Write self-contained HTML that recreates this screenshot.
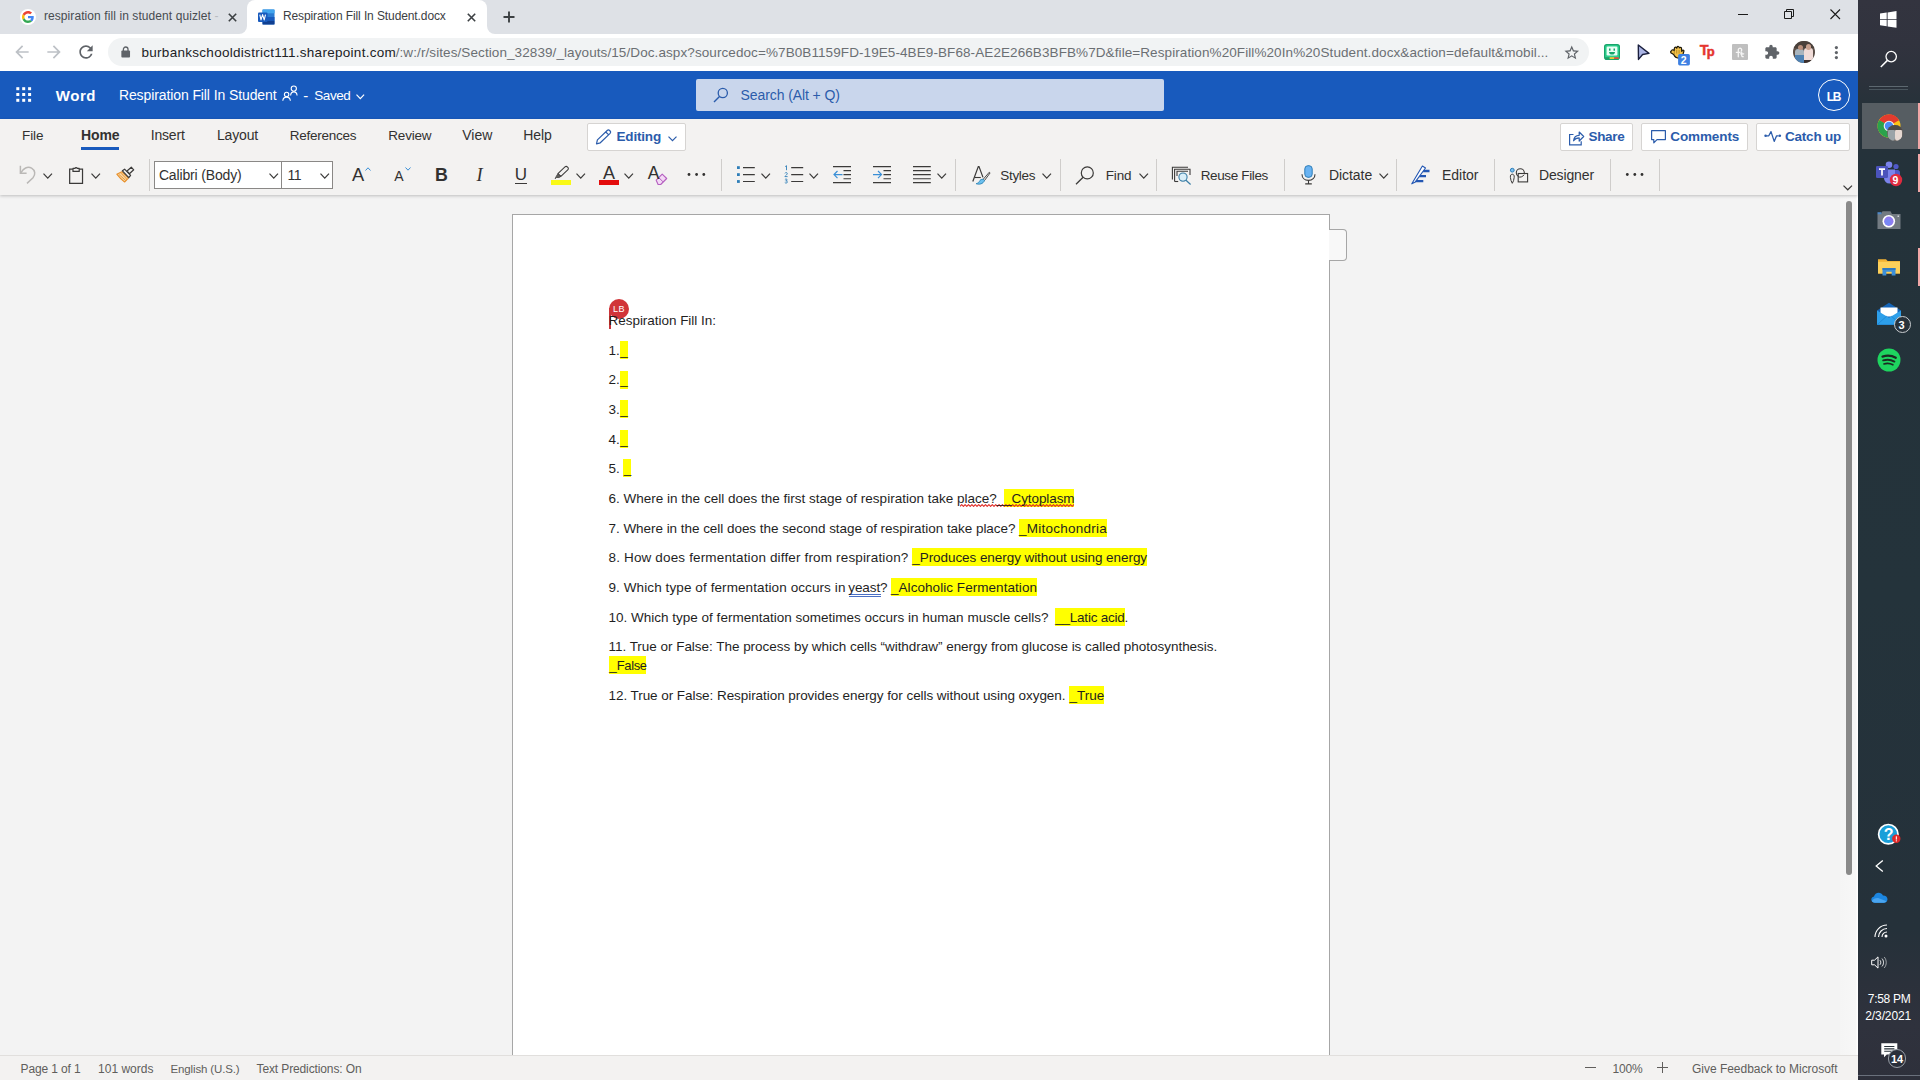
<!DOCTYPE html>
<html><head><meta charset="utf-8"><title>Respiration Fill In Student.docx</title>
<style>

*{box-sizing:border-box;margin:0;padding:0}
html,body{width:1920px;height:1080px;overflow:hidden;background:#f3f3f3;font-family:"Liberation Sans",sans-serif}
.a{position:absolute}
svg{position:absolute;overflow:visible}
.t{position:absolute;white-space:nowrap;line-height:20px;color:#323130;font-family:"Liberation Sans",sans-serif}
#tabstrip{left:0;top:0;width:1858px;height:34px;background:#dee1e6}
#acttab{left:247px;top:0;width:240px;height:34px;background:#fff;border-radius:8px 8px 0 0}
.foot{width:8px;height:8px;top:26px;background:#fff}
.foot i{position:absolute;display:block;width:16px;height:16px;border-radius:8px;background:#dee1e6;top:-8px}
#toolbar{left:0;top:34px;width:1858px;height:37px;background:#fff}
#omni{left:108px;top:38px;width:1481px;height:28px;border-radius:14px;background:#f1f3f4}
#whead{left:0;top:71px;width:1858px;height:48px;background:#185abd}
#search{left:696px;top:79px;width:468px;height:32px;border-radius:2px;background:#c9d6ec}
#lb{left:1818px;top:79px;width:32px;height:32px;border-radius:16px;border:1px solid #fff}
#ribbon{left:0;top:119px;width:1858px;height:76px;background:#f3f2f1;box-shadow:0 1px 3px rgba(0,0,0,.22)}
.btn{background:#fff;border:1px solid #d6d4d2;border-radius:2px;top:123px;height:28px}
.sep{width:1px;top:159px;height:32px;background:#cfcdcb}
#fontbox{left:154px;top:161px;width:179px;height:28px;background:#fff;border:1px solid #8a8886}
#fontbox i{position:absolute;left:126px;top:0;width:1px;height:26px;background:#8a8886}
#homeul{left:81px;top:147px;width:38px;height:3px;background:#185abd}
#canvas{left:0;top:195px;width:1858px;height:860px;background:#f3f3f3;z-index:-1}
#page{left:512px;top:214px;width:818px;height:845px;background:#fff;border:1px solid #a6a6a6;border-bottom:none}
#ptab{left:1329px;top:229px;width:18px;height:32px;background:#f8f8f8;border:1px solid #a6a6a6;border-left:none;border-radius:0 4px 4px 0}
#status{left:0;top:1055px;width:1858px;height:25px;background:#f3f2f1;border-top:1px solid #e1dfdd}
#sbthumb{left:1846px;top:201px;width:6px;height:674px;border-radius:3px;background:#8a8a8a}
#sbedge{left:1840px;top:195px;width:18px;height:860px;background:linear-gradient(90deg,#f5f5f5 0,#f7f7f7 88%,#fdfdfd 94%,#fff 100%)}
#taskbar{left:1858px;top:0;width:62px;height:1080px;background:linear-gradient(180deg,#33343f 0,#31333e 4%,#2d323c 7%,#27323a 9.5%,#24323a 16%,#24333b 55%,#25313a 86%,#2b313b 91%,#2f323d 95%,#2e303b 100%)}
.hl{background:#ffff00;height:18px}

</style></head>
<body>

<div class="a" id="canvas"></div>
<div class="a" id="sbedge"></div>
<div class="a" id="sbthumb"></div>
<div class="a" id="page"></div>
<div class="a" id="ptab"></div>
<div class="a hl" style="left:620px;top:340.8px;width:7.6px"></div><div class="a hl" style="left:620px;top:370.5px;width:7.6px"></div><div class="a hl" style="left:620px;top:400.1px;width:7.6px"></div><div class="a hl" style="left:620px;top:429.7px;width:7.6px"></div><div class="a hl" style="left:623.3px;top:459.4px;width:7.9px"></div><div class="a hl" style="left:1003.8px;top:489.0px;width:70.4px"></div><div class="a hl" style="left:1018.7px;top:518.6px;width:88.5px"></div><div class="a hl" style="left:912px;top:548.2px;width:235.0px"></div><div class="a hl" style="left:890.8px;top:577.9px;width:146.2px"></div><div class="a hl" style="left:1055px;top:607.5px;width:70.3px"></div><div class="a hl" style="left:609px;top:656.2px;width:37.0px"></div><div class="a hl" style="left:1069.2px;top:685.9px;width:35.0px"></div><svg style="left:959.5px;top:503.98px;overflow:hidden" width="114.5" height="3.500" viewBox="0 0 114.5 3.500"><path d="M0 2.400l1.700-1.800l1.700 1.800l1.700-1.800l1.700 1.800l1.700-1.800l1.700 1.800l1.700-1.800l1.700 1.800l1.700-1.800l1.700 1.800l1.700-1.800l1.700 1.800l1.700-1.800l1.700 1.800l1.700-1.800l1.700 1.800l1.700-1.800l1.700 1.800l1.700-1.800l1.700 1.800l1.700-1.800l1.700 1.800l1.700-1.800l1.700 1.800l1.700-1.800l1.700 1.800l1.700-1.800l1.700 1.800l1.700-1.800l1.700 1.800l1.700-1.800l1.700 1.800l1.700-1.800l1.700 1.800l1.700-1.800l1.700 1.800l1.700-1.800l1.700 1.800l1.700-1.800l1.700 1.800l1.700-1.800l1.700 1.800l1.700-1.800l1.700 1.800l1.700-1.800l1.700 1.800l1.700-1.800l1.700 1.800l1.700-1.800l1.700 1.800l1.700-1.800l1.700 1.800l1.700-1.800l1.700 1.800l1.700-1.800l1.700 1.800l1.700-1.800l1.700 1.800l1.700-1.800l1.700 1.800l1.700-1.800l1.700 1.800l1.700-1.800l1.700 1.800l1.700-1.800l1.700 1.800l1.700-1.800l1.700 1.800" stroke="#e02d27" stroke-width="1.100" fill="none" stroke-linejoin="round"/></svg><div class="a" style="left:849px;top:593.5px;width:32px;height:3px;border-top:1px solid #4a6fc4;border-bottom:1px solid #4a6fc4"></div>
<!-- collaborator flag -->
<div class="a" style="left:609px;top:308px;width:2px;height:21px;background:#c7353b"></div>
<div class="a" style="left:609px;top:299px;width:20px;height:20px;border-radius:10px;background:#d13438"></div>

<div class="a" id="tabstrip"></div>
<div class="a" id="acttab"></div>
<div class="a foot" style="left:239px"><i style="left:-8px"></i></div>
<div class="a foot" style="left:487px"><i style="left:0"></i></div>
<div class="a" id="toolbar"></div>
<div class="a" id="omni"></div>
<!-- google favicon -->
<div class="a" style="left:20px;top:9px;width:16px;height:16px;border-radius:8px;background:#fff"></div>
<svg style="left:22px;top:11px" width="12" height="12" viewBox="0 0 48 48"><path fill="#EA4335" d="M24 9.5c3.54 0 6.71 1.22 9.21 3.6l6.85-6.85C35.9 2.38 30.47 0 24 0 14.62 0 6.51 5.38 2.56 13.22l7.98 6.19C12.43 13.72 17.74 9.5 24 9.5z"/><path fill="#4285F4" d="M46.98 24.55c0-1.57-.15-3.09-.38-4.55H24v9.02h12.94c-.58 2.96-2.26 5.48-4.78 7.18l7.73 6c4.51-4.18 7.09-10.36 7.09-17.65z"/><path fill="#FBBC05" d="M10.53 28.59c-.48-1.45-.76-2.99-.76-4.59s.27-3.14.76-4.59l-7.98-6.19C.92 16.46 0 20.12 0 24c0 3.88.92 7.54 2.56 10.78l7.97-6.19z"/><path fill="#34A853" d="M24 48c6.48 0 11.93-2.13 15.89-5.81l-7.73-6c-2.15 1.45-4.92 2.3-8.16 2.3-6.26 0-11.57-4.22-13.47-9.91l-7.98 6.19C6.51 42.62 14.62 48 24 48z"/></svg>
<!-- tab1 close -->
<svg style="left:228px;top:13px" width="9" height="9" viewBox="0 0 9 9"><path d="M.8.8l7.4 7.4M8.2.8L.8 8.2" stroke="#3c4043" stroke-width="1.6" fill="none"/></svg>
<!-- word favicon -->
<svg style="left:258px;top:9px" width="17" height="16" viewBox="0 0 17 16"><rect x="4.5" y="0.5" width="12" height="15" rx="1" fill="#2b7cd3"/><rect x="4.5" y="0.5" width="12" height="3.8" fill="#41a5ee"/><rect x="4.5" y="8" width="12" height="3.8" fill="#185abd"/><rect x="4.5" y="11.8" width="12" height="3.7" fill="#103f91"/><rect x="0" y="3.5" width="9.5" height="9.5" rx="1" fill="#185abd"/><path d="M1.8 5.6l1.2 5.3 1.6-5.3 1.6 5.3 1.3-5.3" stroke="#fff" stroke-width="1.1" fill="none" stroke-linejoin="round"/></svg>
<!-- tab2 close -->
<svg style="left:466.5px;top:13px" width="9" height="9" viewBox="0 0 9 9"><path d="M.8.8l7.4 7.4M8.2.8L.8 8.2" stroke="#3c4043" stroke-width="1.6" fill="none"/></svg>
<!-- new tab plus -->
<svg style="left:503px;top:11px" width="12" height="12" viewBox="0 0 12 12"><path d="M6 .5v11M.5 6h11" stroke="#3c4043" stroke-width="1.9" fill="none"/></svg>
<!-- window controls -->
<svg style="left:1738px;top:9px" width="104" height="11" viewBox="0 0 104 11"><path d="M0 5.5h10" stroke="#1b1b1b" stroke-width="1"/><path d="M46.5 2.5h7v7h-7zM48.5 2.5v-2h7v7h-2" stroke="#1b1b1b" stroke-width="1" fill="none"/><path d="M92.5.5l9.5 9.5M102 .5l-9.500 9.500" stroke="#1b1b1b" stroke-width="1.1" fill="none"/></svg>
<!-- nav -->
<svg style="left:12px;top:42px" width="20" height="20" viewBox="0 0 24 24"><path fill="#bdc1c6" d="M20 11H7.83l5.590-5.590L12 4l-8 8 8 8 1.410-1.410L7.830 13H20v-2z"/></svg>
<svg style="left:44px;top:42px" width="20" height="20" viewBox="0 0 24 24"><path fill="#bdc1c6" d="M4 11h12.170l-5.590-5.590L12 4l8 8-8 8-1.410-1.410L16.170 13H4v-2z"/></svg>
<svg style="left:76px;top:42px" width="20" height="20" viewBox="0 0 24 24"><path fill="#5f6368" d="M17.650 6.350A7.958 7.958 0 0 0 12 4c-4.420 0-7.990 3.580-7.990 8s3.570 8 7.990 8c3.730 0 6.840-2.550 7.730-6h-2.080A5.990 5.990 0 0 1 12 18c-3.310 0-6-2.690-6-6s2.690-6 6-6c1.660 0 3.140.690 4.220 1.780L13 11h7V4l-2.350 2.350z"/></svg>
<!-- lock -->
<svg style="left:121.400px;top:45.600px" width="9.400" height="12" viewBox="0 0 10 13"><rect x="0.300" y="5" width="9.400" height="7.500" rx="1" fill="#5f6368"/><path d="M2.500 5.500V3.600a2.500 2.500 0 0 1 5 0V5.500" stroke="#5f6368" stroke-width="1.400" fill="none"/></svg>
<!-- star -->
<svg style="left:1563px;top:43.500px" width="17.500" height="17.500" viewBox="0 0 24 24"><path fill="#5f6368" d="M22 9.240l-7.190-.620L12 2 9.190 8.630 2 9.240l5.460 4.730L5.820 21 12 17.270 18.180 21l-1.630-7.030L22 9.240zM12 15.400l-3.760 2.270 1-4.280-3.320-2.880 4.380-.380L12 6.100l1.710 4.040 4.380.380-3.320 2.880 1 4.280L12 15.400z"/></svg>
<!-- ext1 green face -->
<svg style="left:1604px;top:44px" width="16" height="16" viewBox="0 0 16 16"><rect x="0.600" y="0.600" width="14.800" height="14.800" rx="2.200" fill="#2fd08f" stroke="#17a56b" stroke-width="1.200"/><rect x="2.600" y="2.600" width="10.800" height="8.800" rx="1.200" fill="#e9fff5"/><rect x="5" y="4.500" width="1.500" height="2.200" fill="#17a56b"/><rect x="9.500" y="4.500" width="1.500" height="2.200" fill="#17a56b"/><path d="M5 8h6c0 1.600-1.300 2.600-3 2.600S5 9.600 5 8z" fill="#17a56b"/><rect x="1.200" y="13.200" width="4.500" height="1.800" fill="#1f9d68"/><rect x="5.700" y="13.200" width="4.500" height="1.800" fill="#f2c531"/><rect x="10.200" y="13.200" width="4.500" height="1.800" fill="#e2493b"/></svg>
<!-- ext2 cursor -->
<svg style="left:1637px;top:44px" width="14" height="16" viewBox="0 0 14 16"><path d="M1.300 1L12 9.400l-6.400 1.100-4.100 4.900z" fill="#aab4e4" stroke="#1a1f3d" stroke-width="1.400" stroke-linejoin="round"/></svg>
<!-- ext3 hand + badge -->
<svg style="left:1669px;top:45px" width="22" height="21" viewBox="0 0 22 21"><path d="M2.600 5.600c.6-1.300 2-1 2.500 0l.3-2.400c.3-1.500 2.100-1.400 2.300 0l.3-.9c.6-1.400 2.300-.9 2.300.5l.4-.2c1-.7 2 .2 1.800 1.300l.3 2.500c.4-.9 1.200-1.600 2-1 .5.600-.2 1.500-.4 2.400-.5 3-2.200 5.300-5 5.300-2.400 0-3.800-1.400-4.700-3.500L1.800 7.800c-.4-.9 0-1.800.8-2.200z" fill="#f2c14a" stroke="#1c1708" stroke-width="1.200" stroke-linejoin="round"/><path d="M5.300 6v3M7.700 4.800v3.800M10.100 5v3.600" stroke="#a87b12" stroke-width=".7"/><rect x="9.100" y="8.900" width="11.800" height="11.500" rx="1.600" fill="#3e80e2"/></svg>
<!-- ext4 Tp drawn as text later; ext5 gray -->
<div class="a" style="left:1732px;top:44px;width:16px;height:16px;background:#bfbfbf;border-radius:1px"></div>
<svg style="left:1732px;top:44px" width="16" height="16" viewBox="0 0 16 16"><path d="M6.300 12.800V5.800a1.700 1.700 0 1 1 2.900 1.300M4.300 8.300h3.800M9.700 8.300v3.200c0 .9.500 1.300 1.500 1.200M8.500 9.800h3.200" stroke="#f6f6f6" stroke-width="1.300" fill="none" stroke-linecap="round"/></svg>
<!-- puzzle -->
<svg style="left:1763.500px;top:44.200px" width="16" height="16" viewBox="0 0 24 24"><path fill="#5f6368" d="M20.500 11H19V7c0-1.100-.900-2-2-2h-4V3.500C13 2.120 11.880 1 10.500 1S8 2.120 8 3.500V5H4c-1.100 0-1.990.900-1.990 2v3.800H3.500c1.490 0 2.700 1.210 2.700 2.700s-1.210 2.700-2.700 2.700H2V20c0 1.100.900 2 2 2h3.800v-1.500c0-1.490 1.210-2.700 2.700-2.700 1.490 0 2.700 1.210 2.700 2.700V22H17c1.100 0 2-.900 2-2v-4h1.500c1.380 0 2.500-1.120 2.500-2.500S21.880 11 20.500 11z"/></svg>
<!-- avatar -->
<div class="a" style="left:1793px;top:41px;width:22px;height:22px;border-radius:11px;overflow:hidden;background:#5a4e47">
<div class="a" style="left:0;top:0;width:22px;height:7px;background:#4a413b"></div>
<div class="a" style="left:2px;top:8px;width:9px;height:7px;border-radius:3px 3px 0 0;background:#a9b5be"></div>
<div class="a" style="left:2px;top:14px;width:9px;height:9px;background:#4f82b3"></div>
<div class="a" style="left:11px;top:7px;width:9px;height:12px;border-radius:3px 3px 0 0;background:#f0dcd8"></div>
<div class="a" style="left:11px;top:19px;width:10px;height:4px;background:#3a2f2c"></div>
<div class="a" style="left:4.500px;top:3.500px;width:5px;height:5.500px;border-radius:3px;background:#b98f7c"></div>
<div class="a" style="left:12.500px;top:3px;width:5px;height:5.500px;border-radius:3px;background:#c9a18f"></div>
</div>
<!-- menu dots -->
<svg style="left:1834px;top:45px" width="5" height="15" viewBox="0 0 5 15"><circle cx="2.400" cy="2.600" r="1.600" fill="#5f6368"/><circle cx="2.400" cy="7.600" r="1.600" fill="#5f6368"/><circle cx="2.400" cy="12.600" r="1.600" fill="#5f6368"/></svg>

<div class="a" id="whead"></div>
<div class="a" id="search"></div>
<div class="a" id="lb"></div>
<!-- waffle -->
<svg style="left:16px;top:87px" width="16" height="16" viewBox="0 0 16 16"><g fill="#fff"><rect x=".3" y=".2" width="3" height="3"/><rect x="6.200" y=".2" width="3" height="3"/><rect x="12.100" y=".2" width="3" height="3"/><rect x=".3" y="6" width="3" height="3"/><rect x="6.200" y="6" width="3" height="3"/><rect x="12.100" y="6" width="3" height="3"/><rect x=".3" y="11.800" width="3" height="3"/><rect x="6.200" y="11.800" width="3" height="3"/><rect x="12.100" y="11.800" width="3" height="3"/></g></svg>
<!-- people icon -->
<svg style="left:282px;top:85px" width="17" height="17" viewBox="0 0 17 17"><g stroke="#fff" stroke-width="1.100" fill="none"><circle cx="11.800" cy="3.600" r="2.600"/><path d="M8.600 10.500c.2-2.300 1.500-3.600 3.200-3.600s3.100 1.300 3.300 3.600"/><circle cx="4.600" cy="9.400" r="2.200"/><path d="M.8 15.800c.2-2.300 1.700-3.700 3.800-3.700s3.500 1.400 3.800 3.700"/></g></svg>
<!-- search icon -->
<svg style="left:713px;top:87px" width="16" height="16" viewBox="0 0 16 16"><circle cx="9.800" cy="6" r="4.600" stroke="#2b5cab" stroke-width="1.300" fill="none"/><path d="M6.500 9.400L1 15" stroke="#2b5cab" stroke-width="1.400"/></svg>
<div class="a" id="ribbon"></div>
<div class="a" id="homeul"></div>
<div class="a btn" style="left:587px;width:99px"></div>
<div class="a btn" style="left:1560px;width:73px"></div>
<div class="a btn" style="left:1641px;width:107px"></div>
<div class="a btn" style="left:1756px;width:94px"></div>
<!-- pencil -->
<svg style="left:595px;top:129px" width="17" height="16" viewBox="0 0 17 16"><path d="M1.500 14.800l.9-3.900L12.200 1.500a1.700 1.700 0 0 1 2.400 0l.5.500a1.700 1.700 0 0 1 0 2.400L5.300 13.800z M10.800 3l2.900 2.900" stroke="#2b5cab" stroke-width="1.200" fill="none" stroke-linejoin="round"/></svg>
<!-- share icon -->
<svg style="left:1568px;top:129.500px" width="17" height="16" viewBox="0 0 17 16"><path d="M5.500 4.500H1.600v10.300h11.600v-3.600" stroke="#2b5cab" stroke-width="1.200" fill="none"/><path d="M5.600 10.800c.3-3.400 2.400-5.400 5.600-5.500V2l4.500 4.500-4.500 4.500V7.900c-2.600 0-4.300.8-5.600 2.900z" stroke="#2b5cab" stroke-width="1.200" fill="none" stroke-linejoin="round"/></svg>
<!-- comment icon -->
<svg style="left:1650.500px;top:130px" width="15" height="14" viewBox="0 0 15 14"><path d="M.6.600h13.800v9H6l-3.200 3.200V9.600H.6z" stroke="#2b5cab" stroke-width="1.200" fill="none" stroke-linejoin="round"/></svg>
<!-- catch up icon -->
<svg style="left:1764px;top:130px" width="18" height="13" viewBox="0 0 18 13"><path d="M2.200 5.800h2.600L7 1.600l3.200 9.800 2.400-5.600h2" stroke="#2b5cab" stroke-width="1.300" fill="none" stroke-linejoin="round"/><circle cx="1.600" cy="5.800" r="1.300" fill="#2b5cab"/><circle cx="15.800" cy="5.800" r="1.300" fill="#2b5cab"/></svg>
<!-- ribbon row 2 -->
<div class="a sep" style="left:149px"></div>
<div class="a sep" style="left:721px"></div>
<div class="a sep" style="left:955px"></div>
<div class="a sep" style="left:1060px"></div>
<div class="a sep" style="left:1156px"></div>
<div class="a sep" style="left:1284px"></div>
<div class="a sep" style="left:1396px"></div>
<div class="a sep" style="left:1494px"></div>
<div class="a sep" style="left:1610px"></div>
<div class="a sep" style="left:1659px"></div>
<div class="a" id="fontbox"><i></i></div>
<!-- undo (disabled) -->
<svg style="left:19px;top:165px" width="18" height="19" viewBox="0 0 18 19"><path d="M1.400 .8v7.400h6.200" stroke="#bab8b6" stroke-width="1.500" fill="none"/><path d="M1.800 7.800C4.200 3.400 8.600 1 12.600 3.200c3.800 2.200 4 6.600 1.400 9.600L8 18.400" stroke="#bab8b6" stroke-width="1.500" fill="none"/></svg>
<!-- clipboard -->
<svg style="left:69px;top:165.700px" width="14.200" height="18.300" viewBox="0 0 15 19"><path d="M4 3.200H.7v15h13.600v-15H11" stroke="#3b3a39" stroke-width="1.300" fill="none"/><path d="M4.200 5.600V2.400h2a1.400 1.400 0 0 1 2.600 0h2v3.200z" stroke="#3b3a39" stroke-width="1.300" fill="none" stroke-linejoin="round"/></svg>
<!-- format painter -->
<svg style="left:116px;top:166px" width="19" height="17" viewBox="0 0 19 17"><path d="M.8 8.200l5-2.400 6.600 6.200-3.800 4c-2.600-1.800-5.400-4.600-7.800-7.800z" fill="#f8d7a6" stroke="#e8912d" stroke-width="1.100" stroke-linejoin="round"/><path d="M2.800 8.400l6.600 5.800M5 7.200l5.600 5.800" stroke="#e8912d" stroke-width=".9"/><path d="M6.400 4.800l2.200-1.600 6 6.200-1.800 2.300z" fill="#f3f2f1" stroke="#3b3a39" stroke-width="1.200" stroke-linejoin="round"/><path d="M11 5l4.300-3.800 2.400 2.600-4.300 3.900z" fill="#f3f2f1" stroke="#3b3a39" stroke-width="1.200" stroke-linejoin="round"/></svg>
<!-- grow/shrink carets -->
<svg style="left:365px;top:166.500px" width="6" height="4" viewBox="0 0 6 4"><path d="M.5 3.500L3 .8l2.500 2.700" stroke="#3a8fd6" stroke-width="1" fill="none"/></svg>
<svg style="left:405px;top:166.500px" width="6" height="4" viewBox="0 0 6 4"><path d="M.5 .5L3 3.200 5.500 .5" stroke="#3a8fd6" stroke-width="1" fill="none"/></svg>
<!-- underline bar for U -->
<div class="a" style="left:515px;top:183px;width:12px;height:1.200px;background:#3b3a39"></div>
<!-- highlighter -->
<svg style="left:553.500px;top:166px" width="15.800" height="13.900" viewBox="0 0 17 15"><path d="M4.200 8.300L11.800 1c.9-.8 2-.7 2.800.1l.3.300c.8.900.8 2-.1 2.800L7.400 11.300z" stroke="#3b3a39" stroke-width="1.100" fill="none" stroke-linejoin="round"/><path d="M4.200 8.300l3.200 3-2 1.200-2.600-.1-1.600 1.300 1.300-2.700z" fill="#605e5c" stroke="#3b3a39" stroke-width=".8" stroke-linejoin="round"/></svg>
<div class="a" style="left:551px;top:180px;width:20px;height:4.500px;background:#f9f916"></div>
<div class="a" style="left:599px;top:180px;width:20px;height:4.500px;background:#e40c0c"></div>
<!-- eraser -->
<svg style="left:655px;top:173px" width="13" height="12" viewBox="0 0 13 12"><path d="M1.200 7.200L7.200 1.200l4.500 4.300-6 6-2.600-.1z" fill="#f3d9f5" stroke="#b55fc0" stroke-width="1.100" stroke-linejoin="round"/><path d="M3.800 4.600l4.300 4.300" stroke="#b55fc0" stroke-width="1"/></svg>
<!-- dots -->
<svg style="left:686px;top:172px" width="22" height="5" viewBox="0 0 22 5"><g fill="#323130"><circle cx="3" cy="2.500" r="1.400"/><circle cx="10.600" cy="2.500" r="1.400"/><circle cx="17.800" cy="2.500" r="1.400"/></g></svg>
<svg style="left:1624px;top:172px" width="22" height="5" viewBox="0 0 22 5"><g fill="#323130"><circle cx="3.300" cy="2.500" r="1.400"/><circle cx="10.800" cy="2.500" r="1.400"/><circle cx="18" cy="2.500" r="1.400"/></g></svg>
<!-- bullets -->
<svg style="left:736px;top:165px" width="20" height="19" viewBox="0 0 20 19"><g fill="#2e7eb8"><rect x="1" y="1.200" width="2.800" height="2.800"/><rect x="1" y="8.200" width="2.800" height="2.800"/><rect x="1" y="15.100" width="2.800" height="2.800"/></g><path d="M7 2.600h11.800M7 9.600h11.800M7 16.500h11.800" stroke="#3b3a39" stroke-width="1.100"/></svg>
<!-- numbering -->
<svg style="left:784px;top:165px" width="20" height="19" viewBox="0 0 20 19"><path d="M7.200 2.600h12M7.200 9.600h12M7.200 16.500h12" stroke="#3b3a39" stroke-width="1.100"/><g stroke="#2e7eb8" stroke-width=".9" fill="none"><path d="M1.200 1.600l1.300-.9v4.500"/><path d="M.9 8.300c.3-.9 2.400-1 2.400.2 0 1-1.700 1.800-2.400 3.100h2.700"/><path d="M.9 14.600c.5-.8 2.400-.7 2.300.4-.1.700-.8.900-1.500.9.900 0 1.700.3 1.700 1.100 0 1.200-2.100 1.300-2.600.5"/></g></svg>
<!-- outdent -->
<svg style="left:833px;top:165px" width="19" height="19" viewBox="0 0 19 19"><path d="M0 1.600h18M10.500 5.600h7.500M10.500 9.600h7.500M10.500 13.700h7.500M0 17.600h18" stroke="#3b3a39" stroke-width="1.100"/><path d="M9.500 9.600H1M4.500 6L1 9.600l3.500 3.600" stroke="#3a8fd6" stroke-width="1.200" fill="none"/></svg>
<!-- indent -->
<svg style="left:873px;top:165px" width="19" height="19" viewBox="0 0 19 19"><path d="M0 1.600h18M10.500 5.600h7.500M10.500 9.600h7.500M10.500 13.700h7.500M0 17.600h18" stroke="#3b3a39" stroke-width="1.100"/><path d="M0 9.600h8.500M5 6l3.500 3.600L5 13.200" stroke="#3a8fd6" stroke-width="1.200" fill="none"/></svg>
<!-- align -->
<svg style="left:913px;top:165px" width="19" height="19" viewBox="0 0 19 19"><path d="M0 1.600h17.800M0 5.600h17.800M0 9.600h17.800M0 13.700h17.800M0 17.600h17.800" stroke="#3b3a39" stroke-width="1.100"/></svg>
<!-- styles icon -->
<svg style="left:972px;top:166px" width="19" height="19" viewBox="0 0 19 19"><path d="M.8 15.500L6.300.600h.7l4 10.800" stroke="#3b3a39" stroke-width="1.200" fill="none"/><path d="M2.500 11.500h6.300" stroke="#3b3a39" stroke-width="1.100"/><path d="M17.300 6.200l-6.300 7.300 1.400 1.200 5.700-7.800z" fill="#f3f2f1" stroke="#3b3a39" stroke-width=".9" stroke-linejoin="round"/><path d="M11.300 13.300c-2-.3-3.300.7-3.900 2.100-.5 1.100-1.600 1.900-3.300 2.300 3 1.100 7.100.4 8.400-3.300z" fill="#6cc0ee" stroke="#2e86b8" stroke-width=".9" stroke-linejoin="round"/></svg>
<!-- find icon -->
<svg style="left:1075px;top:165.500px" width="20" height="19" viewBox="0 0 20 19"><circle cx="12.300" cy="6.900" r="6" stroke="#3b3a39" stroke-width="1.200" fill="none"/><path d="M8.100 11.200L1 18.200" stroke="#3b3a39" stroke-width="1.300"/></svg>
<!-- reuse files icon -->
<svg style="left:1171px;top:166px" width="21" height="19" viewBox="0 0 21 19"><path d="M1.400 13.500V1.300H17" stroke="#3b3a39" stroke-width="1.100" fill="none"/><path d="M3.600 15.500V3.300H19V9" stroke="#3b3a39" stroke-width="1.100" fill="none"/><path d="M3.600 15.500h3.600" stroke="#3b3a39" stroke-width="1.100"/><path d="M6 10V5.300h11" stroke="#3b3a39" stroke-width="1.100" fill="none"/><circle cx="12" cy="11.100" r="4.100" stroke="#3a7ea6" stroke-width="1.100" fill="#d9eef8"/><path d="M15 14.200l4.600 4.300" stroke="#3a7ea6" stroke-width="1.200"/></svg>
<!-- dictate mic -->
<svg style="left:1301px;top:165px" width="15" height="20" viewBox="0 0 15 20"><rect x="3.800" y=".7" width="7.400" height="11.600" rx="3.200" fill="#69b3f2" stroke="#2e7eb8" stroke-width="1"/><path d="M1 9.200c0 3.600 2.600 6.200 6.500 6.200s6.500-2.600 6.500-6.200M7.500 15.400v3.400M4.200 18.900h6.600" stroke="#3b3a39" stroke-width="1.100" fill="none"/></svg>
<!-- editor icon -->
<svg style="left:1411px;top:165px" width="20" height="20" viewBox="0 0 20 20"><path d="M12.100 6h6.400M8.100 11.200h6.900M4.200 16.200h8.100" stroke="#2357b3" stroke-width="2.300"/><path d="M.8 18.800L11.400 1l3.100 2L4.300 16.900z" fill="#fff" stroke="#2357b3" stroke-width="1.100" stroke-linejoin="round"/></svg>
<!-- designer icon -->
<svg style="left:1509px;top:166px" width="20" height="18" viewBox="0 0 20 18"><circle cx="3.300" cy="4.200" r="1.900" fill="#7cc0f2" stroke="#2e7eb8" stroke-width="1"/><path d="M3.300 8.200c1.400 0 2.100 1.200 1.900 3.200-.2 2.300-.9 4.400-1.900 5.900-1-1.500-1.700-3.600-1.900-5.900-.2-2 .5-3.200 1.900-3.200z" stroke="#3b3a39" stroke-width="1" fill="none"/><circle cx="11.300" cy="6.800" r="4" stroke="#3b3a39" stroke-width="1.100" fill="none"/><rect x="9.200" y="7.500" width="9.400" height="8.400" stroke="#3b3a39" stroke-width="1.100" fill="#f3f2f1"/><path d="M9.200 10.700c1.700 1 4.600.2 5.900-2" stroke="#3b3a39" stroke-width="1" fill="none"/></svg>
<svg style="left:43px;top:173px" width="9.5" height="6.2" viewBox="0 0 9.5 6.2"><path d="M.5 .6L4.75 5.2L9.0 .6" stroke="#3b3a39" stroke-width="1.2" fill="none"/></svg><svg style="left:91px;top:173px" width="9.5" height="6.2" viewBox="0 0 9.5 6.2"><path d="M.5 .6L4.75 5.2L9.0 .6" stroke="#3b3a39" stroke-width="1.2" fill="none"/></svg><svg style="left:268.5px;top:173px" width="9.5" height="6.2" viewBox="0 0 9.5 6.2"><path d="M.5 .6L4.75 5.2L9.0 .6" stroke="#3b3a39" stroke-width="1.2" fill="none"/></svg><svg style="left:320px;top:173px" width="9.5" height="6.2" viewBox="0 0 9.5 6.2"><path d="M.5 .6L4.75 5.2L9.0 .6" stroke="#3b3a39" stroke-width="1.2" fill="none"/></svg><svg style="left:576px;top:172.7px" width="9.5" height="6.2" viewBox="0 0 9.5 6.2"><path d="M.5 .6L4.75 5.2L9.0 .6" stroke="#3b3a39" stroke-width="1.2" fill="none"/></svg><svg style="left:624px;top:172.7px" width="9.5" height="6.2" viewBox="0 0 9.5 6.2"><path d="M.5 .6L4.75 5.2L9.0 .6" stroke="#3b3a39" stroke-width="1.2" fill="none"/></svg><svg style="left:761px;top:172.9px" width="9.5" height="6.2" viewBox="0 0 9.5 6.2"><path d="M.5 .6L4.75 5.2L9.0 .6" stroke="#3b3a39" stroke-width="1.2" fill="none"/></svg><svg style="left:809px;top:172.9px" width="9.5" height="6.2" viewBox="0 0 9.5 6.2"><path d="M.5 .6L4.75 5.2L9.0 .6" stroke="#3b3a39" stroke-width="1.2" fill="none"/></svg><svg style="left:937px;top:172.9px" width="9.5" height="6.2" viewBox="0 0 9.5 6.2"><path d="M.5 .6L4.75 5.2L9.0 .6" stroke="#3b3a39" stroke-width="1.2" fill="none"/></svg><svg style="left:1042px;top:173px" width="9.5" height="6.2" viewBox="0 0 9.5 6.2"><path d="M.5 .6L4.75 5.2L9.0 .6" stroke="#3b3a39" stroke-width="1.2" fill="none"/></svg><svg style="left:1139px;top:173px" width="9.5" height="6.2" viewBox="0 0 9.5 6.2"><path d="M.5 .6L4.75 5.2L9.0 .6" stroke="#3b3a39" stroke-width="1.2" fill="none"/></svg><svg style="left:1379px;top:173px" width="9.5" height="6.2" viewBox="0 0 9.5 6.2"><path d="M.5 .6L4.75 5.2L9.0 .6" stroke="#3b3a39" stroke-width="1.2" fill="none"/></svg><svg style="left:1843px;top:185px" width="9.5" height="5.8" viewBox="0 0 9.5 5.8"><path d="M.5 .6L4.75 4.8L9.0 .6" stroke="#3b3a39" stroke-width="1.2" fill="none"/></svg><svg style="left:668px;top:135.5px" width="9" height="5.6" viewBox="0 0 9 5.6"><path d="M.5 .6L4.5 4.6L8.5 .6" stroke="#2b5cab" stroke-width="1.2" fill="none"/></svg><svg style="left:355.5px;top:94px" width="8.6" height="5.6" viewBox="0 0 8.6 5.6"><path d="M.5 .6L4.3 4.6L8.1 .6" stroke="#fff" stroke-width="1.2" fill="none"/></svg>
<div class="a" id="status"></div>
<div class="a" style="left:1585px;top:1067px;width:11px;height:1px;background:#605e5c"></div>
<div class="a" style="left:1657px;top:1067px;width:11px;height:1px;background:#605e5c"></div>
<div class="a" style="left:1662px;top:1062px;width:1px;height:11px;background:#605e5c"></div>

<div class="a" id="taskbar"></div>
<!-- win logo -->
<svg style="left:1880px;top:11px" width="17" height="17" viewBox="0 0 17 17"><path fill="#fff" d="M0 2.400L6.700 1.500v6.400H0zM7.600 1.400L16.500 0v7.900H7.600zM0 8.800h6.700v6.400L0 14.300zM7.600 8.800h8.900v8L7.600 15.400z"/></svg>
<!-- search -->
<svg style="left:1880px;top:50px" width="18" height="18" viewBox="0 0 18 18"><circle cx="11.200" cy="6.600" r="5.200" stroke="#fff" stroke-width="1.300" fill="none"/><path d="M7.400 10.400L.8 17" stroke="#fff" stroke-width="1.500"/></svg>
<div class="a" style="left:1869px;top:86px;width:39px;height:1px;background:#5d6870"></div>
<div class="a" style="left:1869px;top:89px;width:39px;height:1px;background:#4a565e"></div>
<!-- active chrome tile -->
<div class="a" style="left:1861.500px;top:103px;width:56px;height:46px;background:#565d62"></div>
<div class="a" style="left:1917.500px;top:103px;width:2.500px;height:46px;background:#f1a7a7"></div>
<div class="a" style="left:1918px;top:154px;width:2px;height:38px;background:#f1a7a7"></div>
<div class="a" style="left:1918px;top:248px;width:2px;height:38px;background:#f1a7a7"></div>
<!-- chrome icon -->
<svg style="left:1877px;top:114px" width="24" height="24" viewBox="0 0 24 24"><circle cx="12" cy="12" r="11.500" fill="#fbc116"/><path d="M12 12L2.040 6.250A11.500 11.500 0 0 1 21.960 6.250z" fill="#e33b2e"/><path d="M12 .5A11.500 11.500 0 0 1 21.960 6.250H12z" fill="#e33b2e"/><path d="M2.040 6.250A11.500 11.500 0 0 0 12 23.500L16 14z" fill="#2ba24c"/><path d="M2.040 6.250L12 12 6.900 14.900z" fill="#2ba24c"/><circle cx="12" cy="12" r="5.300" fill="#f1f1f1"/><circle cx="12" cy="12" r="4.200" fill="#4a8af4"/></svg>
<div class="a" style="left:1887px;top:125px;width:16px;height:16px;border-radius:8px;overflow:hidden;background:#6f6a66"><div class="a" style="left:1px;top:4px;width:7px;height:12px;border-radius:3px;background:#9aa3a8"></div><div class="a" style="left:8px;top:4px;width:7px;height:12px;border-radius:3px;background:#e6d8d2"></div><div class="a" style="left:0;top:0;width:16px;height:5px;background:#4f4a47"></div></div>
<!-- teams -->
<svg style="left:1876px;top:161px" width="26" height="25" viewBox="0 0 26 25"><circle cx="20" cy="5.500" r="2.600" fill="#5059c9"/><rect x="15.500" y="9" width="8.500" height="9.500" rx="2.500" fill="#5059c9"/><circle cx="13" cy="3.800" r="3.300" fill="#7b83eb"/><path d="M8 8.500h11v8.500a5.500 5.500 0 0 1-11 0z" fill="#7b83eb"/><rect x="0" y="5" width="12" height="12" rx="1.200" fill="#4b53bc"/><path d="M3 8.200h6M6 8.200v6.300" stroke="#fff" stroke-width="1.700"/><circle cx="20" cy="19" r="6.200" fill="#e02a3f"/></svg>
<!-- camera -->
<svg style="left:1876px;top:210px" width="26" height="20" viewBox="0 0 26 20"><path d="M1.500 4h3.500l1.500-2.800h8L16 4h8.500v15h-23z" fill="#737b82"/><rect x="1.500" y="2.200" width="4" height="2" fill="#4e88c7"/><circle cx="12.800" cy="11.200" r="6.300" fill="#fff"/><circle cx="12.800" cy="11.200" r="4.700" fill="#8f7cf0"/><circle cx="11.800" cy="12.200" r="3" fill="#6f8df5" opacity=".7"/><rect x="21.500" y="5.500" width="1.500" height="1.500" fill="#d0d4d8"/></svg>
<!-- explorer -->
<svg style="left:1878px;top:257px" width="23" height="20" viewBox="0 0 23 20"><path d="M0 2.200h8l1.600 1.800H22v12.500H0z" fill="#f2b234"/><rect x="0" y="4.800" width="22" height="11.700" fill="#fdd05a"/><path d="M4.500 11h13v7.500h-3.800v-3.700H8.300v3.700H4.500z" fill="#3d8fd8"/><rect x="4.500" y="11" width="13" height="2" fill="#2f79c0"/></svg>
<!-- mail -->
<svg style="left:1876px;top:302px" width="26" height="24" viewBox="0 0 26 24"><path d="M1 8.500L13 .8l12 7.700v14.300H1z" fill="#1565b8"/><path d="M4.500 5.500h17v9h-17z" fill="#fff"/><path d="M1 8.500l12 7.200 12-7.200v14.300H1z" fill="#2d9fea"/><path d="M1 22.800l9.500-8.500M25 22.800l-9.500-8.500" stroke="#1f8ad6" stroke-width="1"/></svg>

<div class="a" style="left:1893.500px;top:316px;width:17px;height:17px;border-radius:9px;background:#28323a;border:1px solid #c9cdd0"></div>
<!-- spotify -->
<svg style="left:1877px;top:348px" width="24" height="24" viewBox="0 0 24 24"><circle cx="12" cy="12" r="11.500" fill="#1ed45f"/><g stroke="#1b2a22" fill="none" stroke-linecap="round"><path d="M5.500 8.600c4.500-1.400 9.500-1 13.300 1.200" stroke-width="2.200"/><path d="M6.200 12.400c3.800-1.100 8-.7 11.200 1.200" stroke-width="1.900"/><path d="M6.900 15.900c3.100-.9 6.400-.6 9 .9" stroke-width="1.600"/></g></svg>
<!-- help icon -->
<svg style="left:1876px;top:822px" width="26" height="25" viewBox="0 0 26 25"><circle cx="12.300" cy="12.200" r="9.700" fill="#1a9fd9" stroke="#fff" stroke-width="1.700"/><circle cx="20.300" cy="16.800" r="4.200" fill="#e02a2a"/><rect x="19.800" y="14.300" width="1.100" height="3.300" fill="#fff"/><rect x="19.800" y="18.300" width="1.100" height="1.100" fill="#fff"/></svg>
<!-- tray chevron -->
<svg style="left:1874.500px;top:860px" width="9" height="12" viewBox="0 0 9 12"><path d="M7.800 .6L1.200 6l6.600 5.400" stroke="#fff" stroke-width="1.300" fill="none"/></svg>
<!-- onedrive -->
<svg style="left:1870.800px;top:892px" width="16.800" height="11.200" viewBox="0 0 18 12"><path d="M4.200 11.500C1.900 11.500.3 10 .3 8.100c0-1.700 1.200-3 2.900-3.300C3.800 2.500 5.800.9 8.200.9c2 0 3.700 1.100 4.600 2.800 2.700-.2 4.900 1.700 4.900 4.100 0 2.100-1.600 3.700-3.800 3.700z" fill="#1c86e0"/><path d="M.8 9.700c1.700-2.600 5-3.800 8.200-2.800l7.700 3.100c-.7 1-1.700 1.500-2.800 1.500H4.200c-1.500 0-2.800-.7-3.400-1.800z" fill="#4aa5f0"/></svg>
<!-- wifi -->
<svg style="left:1873.500px;top:924px" width="14" height="14" viewBox="0 0 14 14"><g stroke="#fff" fill="none" stroke-width="1.100"><path d="M1 13A12 12 0 0 1 13 1"/><path d="M4.500 13A8.500 8.500 0 0 1 13 4.500"/><path d="M8 13A5 5 0 0 1 13 8"/></g><circle cx="12" cy="12" r="1.500" fill="#fff"/></svg>
<!-- volume -->
<svg style="left:1870.500px;top:956px" width="17" height="13" viewBox="0 0 17 13"><path d="M.7 4.200h2.800L7 .9v11.200L3.500 8.800H.7z" stroke="#fff" stroke-width="1" fill="none" stroke-linejoin="round"/><g stroke="#fff" fill="none" stroke-width="1"><path d="M9 4.300c1 1.200 1 3.200 0 4.400"/><path d="M11 2.600c2 2.200 2 5.600 0 7.800"/><path d="M13.200 1c2.700 3.100 2.700 7.900 0 11" opacity=".55"/></g></svg>
<!-- action center -->
<svg style="left:1880.500px;top:1042.500px" width="17" height="15" viewBox="0 0 17 15"><path d="M.3.300h16v11.200H5.800L3 14.300v-2.800H.3z" fill="#fff"/><path d="M3.200 3.500h10.200M3.200 5.900h10.200M3.200 8.300h10.200" stroke="#28323a" stroke-width="1.100"/></svg>
<div class="a" style="left:1887.500px;top:1049px;width:18.500px;height:18.500px;border-radius:10px;background:#2a2f3a;border:1px solid #9aa0a8"></div>
<div class="a" style="left:1858px;top:1075px;width:62px;height:1px;background:#6a707c"></div>

<div id="txt">
<div class="t" style="left:43.90px;top:6.40px;font-size:12px;color:#474b50;letter-spacing:0.086px;">respiration fill in student quizlet</div>
<div class="t" style="left:214.50px;top:6.40px;font-size:12px;color:#b9bcc1;letter-spacing:0.500px;">-</div>
<div class="t" style="left:282.90px;top:6.40px;font-size:12px;color:#3c4043;letter-spacing:-0.100px;">Respiration Fill In Student.docx</div>
<div class="t" style="left:141.50px;top:43.00px;font-size:13.5px;color:#202124;letter-spacing:0.287px;">burbankschooldistrict111.sharepoint.com</div>
<div class="t" style="left:395.70px;top:43.00px;font-size:13.5px;color:#6b6f73;letter-spacing:0.089px;">/:w:/r/sites/Section_32839/_layouts/15/Doc.aspx?sourcedoc=%7B0B1159FD-19E5-4BE9-BF68-AE2E266B3BFB%7D&amp;file=Respiration%20Fill%20In%20Student.docx&amp;action=default&amp;mobil...</div>
<div class="t" style="left:1680.70px;top:49.80px;font-size:10.5px;font-weight:700;color:#fff;">2</div>
<div class="t" style="left:1699.80px;top:40.40px;font-size:14.5px;font-weight:700;color:#e5352f;-webkit-text-stroke:.4px #e5352f;">T</div>
<div class="t" style="left:1706.80px;top:41.60px;font-size:13px;font-weight:700;color:#e5352f;-webkit-text-stroke:.5px #e5352f;">p</div>
<div class="t" style="left:55.80px;top:85.50px;font-size:15px;font-weight:700;color:#fff;letter-spacing:0.534px;">Word</div>
<div class="t" style="left:118.90px;top:85.20px;font-size:14.0px;color:#fff;letter-spacing:-0.100px;">Respiration Fill In Student</div>
<div class="t" style="left:303.20px;top:85.80px;font-size:15px;color:#fff;letter-spacing:0.800px;">-</div>
<div class="t" style="left:314.20px;top:86.20px;font-size:13.5px;color:#fff;letter-spacing:-0.396px;">Saved</div>
<div class="t" style="left:740.50px;top:85.00px;font-size:14px;color:#2b5cab;letter-spacing:-0.085px;">Search (Alt + Q)</div>
<div class="t" style="left:1826.70px;top:87.00px;font-size:12px;font-weight:700;color:#fff;letter-spacing:-1.200px;">LB</div>
<div class="t" style="left:22.00px;top:126.00px;font-size:13.5px;letter-spacing:-0.116px;">File</div>
<div class="t" style="left:81.10px;top:125.00px;font-size:14px;font-weight:700;letter-spacing:-0.127px;">Home</div>
<div class="t" style="left:150.70px;top:125.00px;font-size:14px;letter-spacing:-0.169px;">Insert</div>
<div class="t" style="left:217.00px;top:125.00px;font-size:14px;letter-spacing:-0.174px;">Layout</div>
<div class="t" style="left:289.80px;top:126.00px;font-size:13.5px;letter-spacing:-0.255px;">References</div>
<div class="t" style="left:388.30px;top:126.00px;font-size:13.5px;letter-spacing:-0.211px;">Review</div>
<div class="t" style="left:462.30px;top:125.00px;font-size:14px;letter-spacing:-0.048px;">View</div>
<div class="t" style="left:523.30px;top:125.00px;font-size:14px;letter-spacing:-0.074px;">Help</div>
<div class="t" style="left:616.50px;top:127.30px;font-size:13.5px;font-weight:700;color:#2b5cab;letter-spacing:-0.179px;">Editing</div>
<div class="t" style="left:1588.50px;top:127.30px;font-size:13.5px;font-weight:700;color:#2b5cab;letter-spacing:-0.346px;">Share</div>
<div class="t" style="left:1670.30px;top:127.30px;font-size:13.5px;font-weight:700;color:#2b5cab;letter-spacing:-0.108px;">Comments</div>
<div class="t" style="left:1785.00px;top:127.30px;font-size:13.5px;font-weight:700;color:#2b5cab;letter-spacing:-0.221px;">Catch up</div>
<div class="t" style="left:158.90px;top:165.00px;font-size:14px;letter-spacing:-0.158px;">Calibri (Body)</div>
<div class="t" style="left:287.50px;top:165.00px;font-size:14px;letter-spacing:-0.600px;">11</div>
<div class="t" style="left:352.00px;top:164.60px;font-size:18.3px;letter-spacing:0.697px;">A</div>
<div class="t" style="left:394.30px;top:165.60px;font-size:14px;letter-spacing:0.856px;">A</div>
<div class="t" style="left:435.10px;top:164.60px;font-size:17.8px;font-weight:700;letter-spacing:-1.444px;">B</div>
<div class="t" style="left:476.50px;top:164.70px;font-size:18.5px;font-family:'Liberation Serif',serif;font-style:italic;letter-spacing:3.328px;">I</div>
<div class="t" style="left:514.70px;top:164.60px;font-size:17px;letter-spacing:0.319px;">U</div>
<div class="t" style="left:603.00px;top:162.70px;font-size:18px;letter-spacing:-0.116px;">A</div>
<div class="t" style="left:647.70px;top:163.00px;font-size:17.5px;letter-spacing:-0.488px;">A</div>
<div class="t" style="left:1000.20px;top:166.00px;font-size:13.5px;letter-spacing:-0.278px;">Styles</div>
<div class="t" style="left:1105.70px;top:166.00px;font-size:13.5px;letter-spacing:-0.116px;">Find</div>
<div class="t" style="left:1200.70px;top:166.00px;font-size:13.5px;letter-spacing:-0.362px;">Reuse Files</div>
<div class="t" style="left:1328.90px;top:165.00px;font-size:14px;letter-spacing:-0.040px;">Dictate</div>
<div class="t" style="left:1442.00px;top:165.00px;font-size:14px;letter-spacing:-0.013px;">Editor</div>
<div class="t" style="left:1538.90px;top:165.00px;font-size:14px;letter-spacing:-0.116px;">Designer</div>
<div class="t" style="left:20.50px;top:1059.00px;font-size:12px;color:#605e5c;letter-spacing:-0.126px;">Page 1 of 1</div>
<div class="t" style="left:98.00px;top:1059.00px;font-size:12px;color:#605e5c;letter-spacing:0.014px;">101 words</div>
<div class="t" style="left:170.50px;top:1059.00px;font-size:11.5px;color:#605e5c;letter-spacing:-0.138px;">English (U.S.)</div>
<div class="t" style="left:256.50px;top:1059.00px;font-size:12px;color:#605e5c;letter-spacing:-0.120px;">Text Predictions: On</div>
<div class="t" style="left:1612.50px;top:1059.00px;font-size:12px;color:#605e5c;letter-spacing:-0.176px;">100%</div>
<div class="t" style="left:1692.00px;top:1059.00px;font-size:12px;color:#605e5c;letter-spacing:-0.022px;">Give Feedback to Microsoft</div>
<div class="t" style="left:1867.80px;top:988.80px;font-size:12px;color:#fff;letter-spacing:-0.286px;">7:58 PM</div>
<div class="t" style="left:1865.30px;top:1005.80px;font-size:12px;color:#fff;letter-spacing:-0.115px;">2/3/2021</div>
<div class="t" style="left:1892.50px;top:169.80px;font-size:10.5px;font-weight:700;color:#fff;letter-spacing:1.156px;">9</div>
<div class="t" style="left:1898.50px;top:314.60px;font-size:11px;font-weight:700;color:#fff;letter-spacing:0.875px;">3</div>
<div class="t" style="left:1891.00px;top:1048.50px;font-size:11px;font-weight:700;color:#fff;letter-spacing:-0.125px;">14</div>
<div class="t" style="left:1883.80px;top:824.80px;font-size:16px;font-weight:700;color:#fff;">?</div>
<div class="t" style="left:613.00px;top:299.30px;font-size:9px;color:#fff;letter-spacing:0.492px;">LB</div>
<div class="t" style="left:608.50px;top:311.20px;font-size:13.5px;color:#1f1f1f;letter-spacing:-0.032px;">Respiration Fill In:</div>
<div class="t" style="left:608.50px;top:340.83px;font-size:13.5px;color:#1f1f1f;letter-spacing:0.017px;">1.</div>
<div class="t" style="left:620.30px;top:340.83px;font-size:13.5px;color:#1f1f1f;letter-spacing:-0.216px;">_</div>
<div class="t" style="left:608.50px;top:370.46px;font-size:13.5px;color:#1f1f1f;letter-spacing:0.017px;">2.</div>
<div class="t" style="left:620.30px;top:370.46px;font-size:13.5px;color:#1f1f1f;letter-spacing:-0.216px;">_</div>
<div class="t" style="left:608.50px;top:400.09px;font-size:13.5px;color:#1f1f1f;letter-spacing:0.017px;">3.</div>
<div class="t" style="left:620.30px;top:400.09px;font-size:13.5px;color:#1f1f1f;letter-spacing:-0.216px;">_</div>
<div class="t" style="left:608.50px;top:429.72px;font-size:13.5px;color:#1f1f1f;letter-spacing:0.017px;">4.</div>
<div class="t" style="left:620.30px;top:429.72px;font-size:13.5px;color:#1f1f1f;letter-spacing:-0.216px;">_</div>
<div class="t" style="left:608.50px;top:459.35px;font-size:13.5px;color:#1f1f1f;letter-spacing:0.017px;">5.</div>
<div class="t" style="left:623.70px;top:459.35px;font-size:13.5px;color:#1f1f1f;letter-spacing:-0.016px;">_</div>
<div class="t" style="left:608.50px;top:488.98px;font-size:13.5px;color:#1f1f1f;letter-spacing:0.005px;">6. Where in the cell does the first stage of respiration take place?</div>
<div class="t" style="left:996.50px;top:488.98px;font-size:13.5px;color:#1f1f1f;letter-spacing:-0.016px;">__</div>
<div class="t" style="left:1011.50px;top:488.98px;font-size:13.5px;color:#1f1f1f;letter-spacing:-0.087px;">Cytoplasm</div>
<div class="t" style="left:608.50px;top:518.61px;font-size:13.5px;color:#1f1f1f;letter-spacing:-0.040px;">7. Where in the cell does the second stage of respiration take place?</div>
<div class="t" style="left:1019.00px;top:518.61px;font-size:13.5px;color:#1f1f1f;letter-spacing:0.246px;">_Mitochondria</div>
<div class="t" style="left:608.50px;top:548.24px;font-size:13.5px;color:#1f1f1f;letter-spacing:0.155px;">8. How does fermentation differ from respiration?</div>
<div class="t" style="left:912.30px;top:548.24px;font-size:13.5px;color:#1f1f1f;letter-spacing:-0.066px;">_Produces energy without using energy</div>
<div class="t" style="left:608.50px;top:577.87px;font-size:13.5px;color:#1f1f1f;letter-spacing:0.093px;">9. Which type of fermentation occurs in</div>
<div class="t" style="left:848.30px;top:577.87px;font-size:13.5px;color:#1f1f1f;letter-spacing:-0.097px;">yeast?</div>
<div class="t" style="left:891.00px;top:577.87px;font-size:13.5px;color:#1f1f1f;letter-spacing:0.051px;">_Alcoholic Fermentation</div>
<div class="t" style="left:608.50px;top:607.50px;font-size:13.5px;color:#1f1f1f;letter-spacing:0.004px;">10. Which type of fermentation sometimes occurs in human muscle cells?</div>
<div class="t" style="left:1055.30px;top:607.50px;font-size:13.5px;color:#1f1f1f;letter-spacing:-0.239px;">__Latic acid.</div>
<div class="t" style="left:608.50px;top:637.13px;font-size:13.5px;color:#1f1f1f;letter-spacing:-0.030px;">11. True or False: The process by which cells “withdraw” energy from glucose is called photosynthesis.</div>
<div class="t" style="left:609.30px;top:656.20px;font-size:13.5px;color:#1f1f1f;letter-spacing:-0.316px;">_</div>
<div class="t" style="left:616.70px;top:656.20px;font-size:13.0px;color:#1f1f1f;letter-spacing:-0.359px;">False</div>
<div class="t" style="left:608.50px;top:685.90px;font-size:13.5px;color:#1f1f1f;letter-spacing:-0.058px;">12. True or False: Respiration provides energy for cells without using oxygen.</div>
<div class="t" style="left:1069.50px;top:685.90px;font-size:13.5px;color:#1f1f1f;letter-spacing:-0.013px;">_True</div>
</div>
</body></html>
